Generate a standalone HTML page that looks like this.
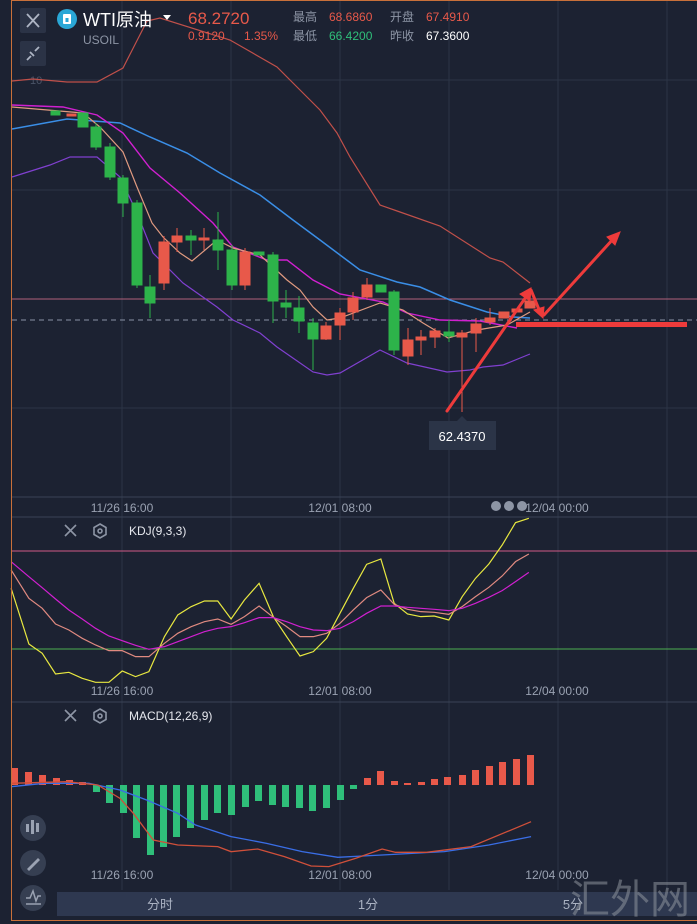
<!DOCTYPE html>
<html><head><meta charset="utf-8"><style>
html,body{margin:0;padding:0;background:#1c2232;}
body{width:697px;height:924px;overflow:hidden;position:relative;font-family:"Liberation Sans","Noto Sans CJK SC",sans-serif;}
svg{position:absolute;left:0;top:0;}
text{font-family:"Liberation Sans","Noto Sans CJK SC",sans-serif;}
</style></head><body>
<svg width="697" height="924" viewBox="0 0 697 924" xmlns="http://www.w3.org/2000/svg">
<rect width="697" height="924" fill="#1c2232"/>
<!-- grid -->
<g stroke="#2c3446" stroke-width="1">
<line x1="122" y1="0" x2="122" y2="890"/><line x1="231" y1="0" x2="231" y2="890"/><line x1="340" y1="0" x2="340" y2="890"/>
<line x1="449" y1="0" x2="449" y2="890"/><line x1="558" y1="0" x2="558" y2="890"/><line x1="667" y1="0" x2="667" y2="890"/>
<line x1="12" y1="80" x2="697" y2="80"/><line x1="12" y1="190" x2="697" y2="190"/><line x1="12" y1="408" x2="697" y2="408"/>
</g>
<g stroke="#3a4356"><line x1="12" y1="497" x2="697" y2="497"/><line x1="12" y1="517" x2="697" y2="517"/><line x1="12" y1="702" x2="697" y2="702"/></g>
<text x="30" y="84" font-size="11" fill="#4a5366">10</text>
<line x1="12" y1="299" x2="697" y2="299" stroke="#b0607a" stroke-width="1"/>
<line x1="12" y1="320" x2="697" y2="320" stroke="#8a93a6" stroke-width="1" stroke-dasharray="5,4"/>
<!-- main lines -->
<g fill="none" stroke-width="1.2">
<polyline stroke="#c0504a" points="12,81 33,79 67,82 97,82 123,68 147,21 160,18 230,40 277,67 300,90 320,110 337,133 350,157 380,205 400,212 440,226 490,258 503,262 530,283"/>
<polyline stroke="#3a8ee6" stroke-width="1.5" points="12,129 67,119 120,123 150,137 187,153 220,173 260,195 293,220 320,240 340,255 360,270 397,282 420,287 450,300 487,312 513,317 530,318"/>
<polyline stroke="#d020d0" stroke-width="1.4" points="12,105 63,107 97,115 123,133 150,168 180,193 213,223 233,247 267,260 287,260 313,280 340,294 383,302 407,313 440,320 480,321 517,328"/>
<polyline stroke="#e09a80" points="12,107 83,113 100,127 123,152 137,187 152,223 163,237 180,253 192,261 217,240 233,248 260,255 273,267 287,280 300,290 313,307 327,320 340,318 380,303 403,310 423,323 448,338 477,330 507,325 530,312"/>
<polyline stroke="#8040d0" points="12,177 50,165 70,157 97,157 120,177 137,213 153,253 183,283 217,307 233,320 260,333 277,347 313,372 327,375 340,373 380,350 407,363 447,372 470,370 483,367 503,365 530,354"/>
</g>
<!-- candles -->
<g stroke-width="1">
<g fill="#2db34a" stroke="#2db34a">
<rect x="51" y="111" width="9" height="4"/><rect x="78" y="113" width="10" height="14"/><line x1="96" y1="123" x2="96" y2="150"/><rect x="91" y="127" width="10" height="20"/>
<line x1="110" y1="143" x2="110" y2="180"/><rect x="105" y="147" width="10" height="30"/><line x1="123" y1="175" x2="123" y2="217"/><rect x="118" y="178" width="10" height="25"/>
<line x1="137" y1="200" x2="137" y2="288"/><rect x="132" y="203" width="10" height="82"/><line x1="150" y1="275" x2="150" y2="318"/><rect x="145" y="287" width="10" height="16"/>
<rect x="186" y="236" width="10" height="4"/><line x1="191" y1="230" x2="191" y2="255"/><line x1="218" y1="212" x2="218" y2="270"/><rect x="213" y="240" width="10" height="10"/>
<line x1="232" y1="245" x2="232" y2="290"/><rect x="227" y="250" width="10" height="35"/><rect x="254" y="252" width="10" height="3"/><line x1="273" y1="252" x2="273" y2="323"/><rect x="268" y="255" width="10" height="46"/>
<line x1="286" y1="290" x2="286" y2="318"/><rect x="281" y="303" width="10" height="4"/><line x1="299" y1="296" x2="299" y2="333"/><rect x="294" y="308" width="10" height="13"/>
<line x1="313" y1="318" x2="313" y2="370"/><rect x="308" y="323" width="10" height="16"/>
<rect x="376" y="285" width="10" height="7"/><line x1="394" y1="290" x2="394" y2="355"/><rect x="389" y="292" width="10" height="58"/><rect x="444" y="332" width="10" height="4"/><line x1="449" y1="320" x2="449" y2="342"/>
</g>
<g fill="#e8594a" stroke="#e8594a">
<rect x="67" y="114" width="9" height="2"/><line x1="164" y1="236" x2="164" y2="290"/><rect x="159" y="242" width="10" height="41"/><line x1="177" y1="228" x2="177" y2="252"/><rect x="172" y="236" width="10" height="6"/>
<rect x="199" y="238" width="10" height="2"/><line x1="204" y1="228" x2="204" y2="250"/><line x1="245" y1="248" x2="245" y2="290"/><rect x="240" y="252" width="10" height="33"/>
<rect x="321" y="326" width="10" height="13"/><line x1="326" y1="322" x2="326" y2="340"/><line x1="340" y1="308" x2="340" y2="340"/><rect x="335" y="313" width="10" height="12"/>
<rect x="348" y="298" width="10" height="14"/><line x1="353" y1="292" x2="353" y2="320"/><line x1="367" y1="278" x2="367" y2="300"/><rect x="362" y="285" width="10" height="12"/>
<line x1="408" y1="328" x2="408" y2="365"/><rect x="403" y="340" width="10" height="16"/><line x1="421" y1="330" x2="421" y2="355"/><rect x="416" y="337" width="10" height="3"/>
<line x1="435" y1="328" x2="435" y2="348"/><rect x="430" y="331" width="10" height="6"/><line x1="462" y1="330" x2="462" y2="412"/><rect x="457" y="333" width="10" height="4"/>
<line x1="476" y1="318" x2="476" y2="352"/><rect x="471" y="324" width="10" height="9"/><line x1="490" y1="308" x2="490" y2="325"/><rect x="485" y="318" width="10" height="4"/>
<rect x="499" y="312" width="10" height="6"/><rect x="512" y="309" width="10" height="3"/><rect x="525" y="301" width="10" height="7"/>
</g></g>
<!-- arrows -->
<g stroke="#ee3b3b" stroke-width="3" fill="#ee3b3b" stroke-linecap="round">
<line x1="447" y1="411" x2="528" y2="294"/><polygon points="531,288 520,294 530,301" stroke-width="1"/>
<line x1="531" y1="290" x2="540" y2="312"/><polygon points="543,318 534,310 544,307" stroke-width="1"/>
<line x1="544" y1="315" x2="614" y2="238"/><polygon points="620,232 607,237 615,245" stroke-width="1"/>
<rect x="516" y="322" width="171" height="5" stroke="none"/>
</g>
<!-- label -->
<polygon points="457,421 462,416 467,421" fill="#2b3447"/>
<rect x="429" y="421" width="67" height="29" fill="#2b3447"/>
<text x="462" y="441" font-size="13" fill="#fff" text-anchor="middle">62.4370</text>
<!-- time axis main -->
<g font-size="12" fill="#9aa2b2" text-anchor="middle">
<text x="122" y="512">11/26 16:00</text><text x="340" y="512">12/01 08:00</text><text x="557" y="512">12/04 00:00</text>
<text x="122" y="695">11/26 16:00</text><text x="340" y="695">12/01 08:00</text><text x="557" y="695">12/04 00:00</text>
<text x="122" y="879">11/26 16:00</text><text x="340" y="879">12/01 08:00</text><text x="557" y="879">12/04 00:00</text>
</g>
<g fill="#8d95a5"><circle cx="496" cy="506" r="5"/><circle cx="509" cy="506" r="5"/><circle cx="522" cy="506" r="5"/></g>
<!-- KDJ -->
<line x1="12" y1="551" x2="697" y2="551" stroke="#d05a86"/>
<line x1="12" y1="649" x2="697" y2="649" stroke="#4caf50"/>
<g transform="translate(0,500) scale(0.4444,0.3333)" fill="none" stroke-width="1.2">
<polyline vector-effect="non-scaling-stroke" stroke="#e8e840" points="25,265 65,432 95,460 125,522 155,517 185,535 215,547 245,547 275,513 305,530 335,515 370,410 400,345 430,320 460,303 490,303 520,357 550,300 583,250 615,350 645,410 675,468 705,455 735,415 765,340 795,265 825,193 857,177 887,310 917,342 947,350 977,348 1010,360 1040,290 1070,235 1100,192 1130,135 1160,68 1190,55"/>
<polyline vector-effect="non-scaling-stroke" stroke="#e08a80" points="25,210 65,295 95,325 125,372 155,390 185,415 215,435 245,452 275,452 305,470 335,470 370,430 400,400 430,380 460,365 490,357 520,373 550,350 583,318 615,352 645,380 675,410 705,410 735,400 765,370 795,330 825,293 857,270 887,313 917,328 947,335 977,337 1010,343 1040,320 1070,290 1100,262 1130,228 1160,185 1190,162"/>
<polyline vector-effect="non-scaling-stroke" stroke="#d020d0" points="25,185 65,230 95,263 125,297 155,330 185,357 215,385 245,408 275,422 305,436 335,448 370,440 400,425 430,410 460,395 490,385 520,380 550,368 583,353 615,353 645,365 675,380 705,390 735,392 765,385 795,365 825,340 857,318 887,318 917,322 947,325 977,328 1010,332 1040,325 1070,310 1100,292 1130,272 1160,245 1190,217"/>
</g>
<g stroke="#8d95a5" stroke-width="1.6" fill="none">
<path d="M65,525 L76,536 M76,525 L65,536"/><path d="M100,524 l6,3.5 v7 l-6,3.5 l-6,-3.5 v-7 z"/><circle cx="100" cy="531" r="2"/>
<path d="M65,710 L76,721 M76,710 L65,721"/><path d="M100,709 l6,3.5 v7 l-6,3.5 l-6,-3.5 v-7 z"/><circle cx="100" cy="716" r="2"/>
</g>
<text x="129" y="535" font-size="12" fill="#e6e8ee">KDJ(9,3,3)</text>
<text x="129" y="720" font-size="12" fill="#e6e8ee">MACD(12,26,9)</text>
<!-- MACD histogram -->
<g fill="#2fbf7a">
<rect x="93" y="785" width="7" height="7"/><rect x="106" y="785" width="7" height="18"/><rect x="120" y="785" width="7" height="28"/><rect x="133" y="785" width="7" height="53"/><rect x="147" y="785" width="7" height="70"/><rect x="160" y="785" width="7" height="62"/><rect x="173" y="785" width="7" height="52"/><rect x="187" y="785" width="7" height="43"/><rect x="201" y="785" width="7" height="35"/><rect x="214" y="785" width="7" height="28"/><rect x="228" y="785" width="7" height="30"/><rect x="242" y="785" width="7" height="22"/><rect x="255" y="785" width="7" height="16"/><rect x="269" y="785" width="7" height="20"/><rect x="282" y="785" width="7" height="22"/><rect x="296" y="785" width="7" height="23"/><rect x="309" y="785" width="7" height="26"/><rect x="323" y="785" width="7" height="23"/><rect x="337" y="785" width="7" height="15"/><rect x="350" y="785" width="7" height="4"/>
</g>
<g fill="#e8594a">
<rect x="11" y="768" width="7" height="17"/><rect x="25" y="772" width="7" height="13"/><rect x="39" y="775" width="7" height="10"/><rect x="53" y="778" width="7" height="7"/><rect x="66" y="780" width="7" height="5"/><rect x="79" y="782" width="7" height="3"/>
<rect x="364" y="778" width="7" height="7"/><rect x="377" y="771" width="7" height="14"/><rect x="391" y="781" width="7" height="4"/><rect x="404" y="783" width="7" height="2"/><rect x="418" y="782" width="7" height="3"/><rect x="431" y="779" width="7" height="6"/><rect x="444" y="777" width="7" height="8"/><rect x="459" y="775" width="7" height="10"/><rect x="472" y="770" width="7" height="15"/><rect x="486" y="766" width="7" height="19"/><rect x="499" y="762" width="7" height="23"/><rect x="513" y="759" width="7" height="26"/><rect x="527" y="755" width="7" height="30"/>
</g>
<g transform="translate(0,780) scale(0.4444,0.3333)" fill="none" stroke-width="1.3">
<polyline vector-effect="non-scaling-stroke" stroke="#3a6ee6" points="25,20 100,10 200,10 270,30 330,60 400,100 440,135 520,170 600,190 680,215 760,232 860,225 1000,215 1100,195 1195,170"/>
<polyline vector-effect="non-scaling-stroke" stroke="#d0503a" points="25,10 150,5 220,15 270,55 300,100 345,180 400,195 490,200 520,215 580,207 640,230 700,258 740,260 800,235 860,207 890,217 960,217 1060,200 1195,125"/>
</g>
<!-- bottom bar -->
<rect x="57" y="892" width="640" height="24" fill="#2e3850"/>
<g font-size="13" fill="#aab2c2" text-anchor="middle"><text x="160" y="909">分时</text><text x="368" y="909">1分</text><text x="573" y="909">5分</text></g>
<text x="630" y="913" font-size="40" fill="#8e939c" fill-opacity="0.55" text-anchor="middle" font-family="Noto Sans CJK SC,sans-serif">汇外网</text>
<!-- left tool icons -->
<g fill="#363f52"><circle cx="33" cy="828" r="13"/><circle cx="33" cy="863" r="13"/><circle cx="33" cy="898" r="13"/></g>
<g fill="#9aa2b2"><rect x="26" y="824" width="3" height="8"/><rect x="31" y="820" width="3" height="14"/><rect x="36" y="823" width="3" height="9"/></g>
<path d="M27,869 L38,858 L40,860 L29,871 Z" fill="#9aa2b2"/>
<path d="M26,898 L30,898 L33,891 L36,901 L38,896 L41,896 M26,904 H41" stroke="#9aa2b2" stroke-width="1.5" fill="none"/>
<!-- header -->
<rect x="20" y="8" width="26" height="25" rx="2" fill="#2b3346"/>
<path d="M27,14 L39,27 M39,14 L27,27" stroke="#aeb5c4" stroke-width="1.8"/>
<rect x="20" y="41" width="26" height="25" rx="2" fill="#2b3346"/>
<path d="M27,60 L31,56 M39,47 L35,51 M30,52 L34,56" stroke="#aeb5c4" stroke-width="1.8"/>
<circle cx="67" cy="19" r="10" fill="#2aa7d6"/>
<rect x="63" y="14" width="8" height="10" rx="1" fill="#fff"/><rect x="65.5" y="18" width="3" height="4" fill="#2aa7d6"/>
<text x="83" y="26" font-size="18" fill="#fff">WTI原油</text>
<polygon points="163,15 171,15 167,20" fill="#fff"/>
<text x="83" y="44" font-size="12" fill="#8d95a5">USOIL</text>
<text x="188" y="24" font-size="17" fill="#e8594a">68.2720</text>
<text x="188" y="40" font-size="12" fill="#e8594a">0.9120</text>
<text x="244" y="40" font-size="12" fill="#e8594a">1.35%</text>
<g font-size="12">
<text x="293" y="21" fill="#8d95a5">最高</text><text x="329" y="21" fill="#e8594a">68.6860</text>
<text x="390" y="21" fill="#8d95a5">开盘</text><text x="426" y="21" fill="#e8594a">67.4910</text>
<text x="293" y="40" fill="#8d95a5">最低</text><text x="329" y="40" fill="#2fbf7a">66.4200</text>
<text x="390" y="40" fill="#8d95a5">昨收</text><text x="426" y="40" fill="#fff">67.3600</text>
</g>
<!-- orange frame -->
<line x1="11.5" y1="0" x2="11.5" y2="921" stroke="#c8703a" stroke-width="1"/>
<line x1="11" y1="920.5" x2="697" y2="920.5" stroke="#c8703a" stroke-width="1"/>
<line x1="11" y1="0.5" x2="697" y2="0.5" stroke="#c8703a" stroke-width="1"/>
</svg>
</body></html>
